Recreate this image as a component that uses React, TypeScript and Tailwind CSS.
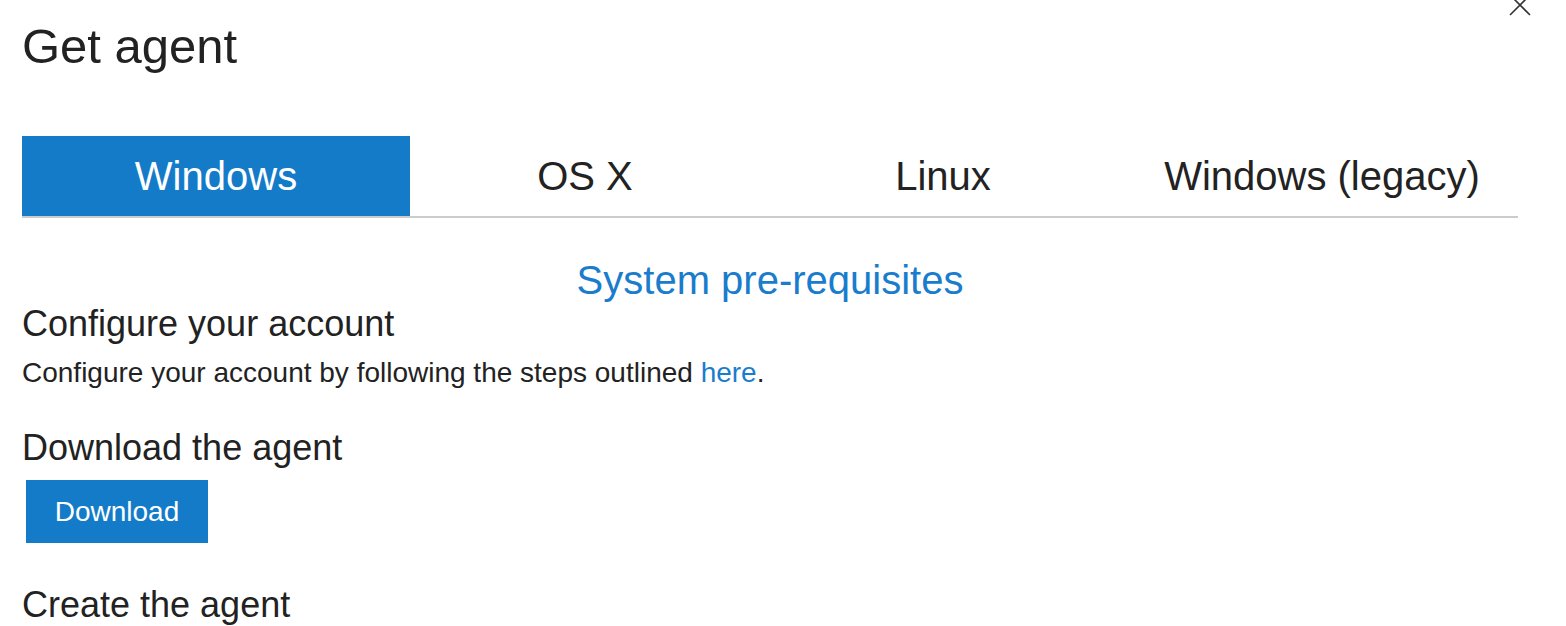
import React from "react";

const tabs = [
  { label: "Windows", w: "w-[388px]", active: true },
  { label: "OS X", w: "w-[350px]", active: false },
  { label: "Linux", w: "w-[366px]", active: false },
  { label: "Windows (legacy)", w: "w-[392px]", active: false },
];

export default function App() {
  return (
    <div
      className="relative w-[1566px] h-[626px] overflow-hidden bg-white text-[#222222] pl-[22px] pr-[48px]"
      style={{ fontFamily: '"Liberation Sans", Arial, sans-serif' }}
    >
      <button className="absolute left-[1509px] top-[-6px] w-[22px] h-[22px]" aria-label="Close">
        <svg width="22" height="22" viewBox="0 0 22 22">
          <path d="M1 1 L21 21 M21 1 L1 21" stroke="#333" strokeWidth="1.6" fill="none" />
        </svg>
      </button>

      <h1 className="pt-[21px] text-[49px] leading-[50px] font-normal">Get agent</h1>

      <div className="mt-[65px] flex border-b-2 border-[#cccccc]">
        {tabs.map((t) => (
          <div
            key={t.label}
            className={`${t.w} h-[80px] flex items-center justify-center text-[40px] ${
              t.active ? "bg-[#147bc9] text-white" : "text-[#222222]"
            }`}
          >
            {t.label}
          </div>
        ))}
      </div>

      <div className="mt-[42px] text-center text-[40px] leading-[40px] text-[#1a7ccc]">
        System pre-requisites
      </div>

      <h2 className="mt-[6px] text-[36px] leading-[36px] font-normal">Configure your account</h2>
      <p className="mt-[17px] text-[28px] leading-[28px]">
        Configure your account by following the steps outlined{" "}
        <span className="text-[#1a7ccc]">here</span>.
      </p>

      <h2 className="mt-[43px] text-[36px] leading-[36px] font-normal">Download the agent</h2>
      <button className="mt-[14px] ml-[4px] w-[182px] h-[63px] bg-[#147bc9] text-white text-[28px] flex items-center justify-center">
        Download
      </button>

      <h2 className="mt-[44px] text-[36px] leading-[36px] font-normal">Create the agent</h2>
    </div>
  );
}
